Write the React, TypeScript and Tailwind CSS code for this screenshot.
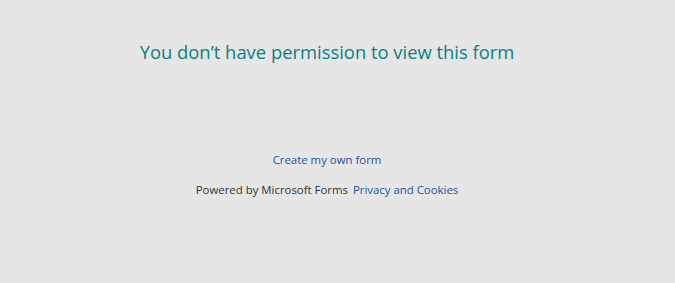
import React from "react";

export default function App() {
  return (
    <div
      className="w-[675px] h-[283px] bg-[#e6e6e6] overflow-hidden pr-[21px] flex flex-col items-center"
      style={{ fontFamily: '"Segoe UI", "Open Sans", "Noto Sans", sans-serif' }}
    >
      <h1 className="mt-[38px] text-[18.4px] leading-[28px] text-[#0a8084] font-normal">
        You don’t have permission to view this form
      </h1>
      <a href="#" className="mt-[86px] text-[11.4px] leading-[16px] text-[#1c52a6]">
        Create my own form
      </a>
      <div className="mt-[14px] flex items-center gap-[5px] text-[11.4px] leading-[16px]">
        <span className="text-[#333333]">Powered by Microsoft Forms</span>
        <a href="#" className="text-[#1c52a6]">Privacy and Cookies</a>
      </div>
    </div>
  );
}
